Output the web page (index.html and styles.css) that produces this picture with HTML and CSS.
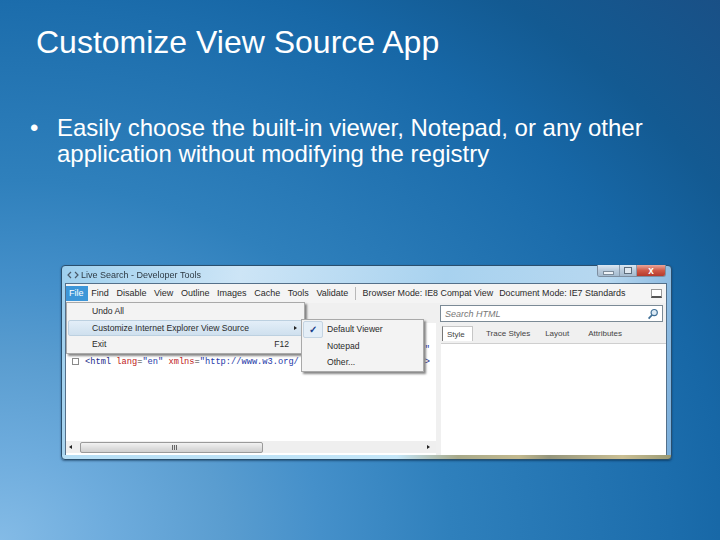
FILE: index.html
```html
<!DOCTYPE html>
<html lang="en">
<head>
<meta charset="utf-8">
<title>Customize View Source App</title>
<link rel="stylesheet" href="styles.css">
</head>
<body>
<main class="slide">
  <h1 class="title">Customize View Source App</h1>
  <ul class="bullets">
    <li><span class="dot">•</span><span>Easily choose the built-in viewer, Notepad, or any other application without modifying the registry</span></li>
  </ul>
  <section class="window">
    <header class="titlebar">
      <svg class="appicon" width="12" height="8" viewBox="0 0 12 8"><path d="M4 1 1 4l3 3M8 1l3 3-3 3" fill="none" stroke="#4a5a6a" stroke-width="1.2"/></svg>
      <span class="wintitle">Live Search - Developer Tools</span>
      <div class="controls">
        <span class="ctl ctl-min"><i></i></span>
        <span class="ctl ctl-max"><i></i></span>
        <span class="ctl ctl-close">x</span>
      </div>
    </header>
    <div class="client">
      <nav class="menubar">
        <span class="mi mi-active">File</span>
        <span class="mi">Find</span>
        <span class="mi">Disable</span>
        <span class="mi">View</span>
        <span class="mi">Outline</span>
        <span class="mi">Images</span>
        <span class="mi">Cache</span>
        <span class="mi">Tools</span>
        <span class="mi">Validate</span>
        <span class="sep"></span>
        <span class="mi mi-mode">Browser Mode: IE8 Compat View</span>
        <span class="mi mi-mode">Document Mode: IE7 Standards</span>
        <span class="dock"></span>
      </nav>
      <div class="toolrow">
        <div class="search">
          <em>Search HTML</em>
          <svg width="12" height="12" viewBox="0 0 12 12"><circle cx="7.2" cy="4.6" r="3.1" fill="#dceaf5" stroke="#3f6f96" stroke-width="1.2"/><path d="M5 7 1.6 10.6" stroke="#3f6f96" stroke-width="1.8"/></svg>
        </div>
      </div>
      <div class="panes">
        <div class="left">
          <div class="code">
            <div class="line line-end"><span class="str">"</span></div>
            <div class="line">
              <span><span class="expander"></span><span class="tag">&lt;html</span> <span class="attr">lang</span>=<span class="str">"en"</span> <span class="attr">xmlns</span>=<span class="str">"http://www.w3.org/</span></span>
              <span><span class="str">"</span><span class="tag">&gt;</span></span>
            </div>
          </div>
          <div class="hscroll">
            <span class="arrow arrow-l"></span>
            <div class="thumb"><span class="grip"></span></div>
            <span class="arrow arrow-r"></span>
          </div>
        </div>
        <div class="right">
          <div class="tabs">
            <span class="tab tab-on">Style</span>
            <span class="tab">Trace Styles</span>
            <span class="tab">Layout</span>
            <span class="tab tab-last">Attributes</span>
          </div>
        </div>
      </div>
    </div>
    <div class="menu menu-file">
      <div class="row"><span>Undo All</span></div>
      <div class="row row-hi"><span>Customize Internet Explorer View Source</span><b class="sub"></b></div>
      <div class="row"><span>Exit</span><span class="key">F12</span></div>
    </div>
    <div class="menu menu-sub">
      <div class="row2"><span class="check check-on">✓</span><span>Default Viewer</span></div>
      <div class="row2"><span class="check"></span><span>Notepad</span></div>
      <div class="row2"><span class="check"></span><span>Other...</span></div>
    </div>
  </section>
</main>
</body>
</html>
```
FILE: styles.css
```css
* { box-sizing: border-box; }
html, body { margin: 0; padding: 0; }
body { width: 720px; height: 540px; overflow: hidden; font-family: "Liberation Sans", Arial, sans-serif; }
.slide {
  width: 720px; height: 540px;
  display: flex; flex-direction: column;
  padding: 24px 48px 0 0;
  background: radial-gradient(ellipse 1000px 800px at 0% 100%, #84bbe6 0%, #6eacdd 11%, #5a9dd0 22.5%, #4590ca 32%, #2f80bc 45%, #1c6dac 67%, #1767a6 73%, #135a92 84%, #1a4f85 100%);
}
.title { margin: 0 0 0 36px; font-size: 32px; line-height: 36px; font-weight: 400; color: #fff; white-space: nowrap; }
.bullets { list-style: none; margin: 55px 0 0 30px; padding: 0; font-size: 24px; line-height: 26px; color: #fff; }
.bullets li { display: flex; }
.dot { width: 27px; flex: none; }
.window {
  position: relative;
  width: 611px; height: 195px;
  margin: 98px 0 0 61px;
  padding: 0 4px 4px 3px;
  border: 1px solid #2a4f6e;
  border-radius: 4px;
  box-shadow: 0 1px 2px rgba(0,30,60,.5);
  background:
    linear-gradient(90deg, #b6def5 0%, #c4e6f8 55%, #a7a98a 65%, #c2b98f 75%, #94957c 80%, #cabf94 92%, #9a9a74 100%) bottom / 100% 4px no-repeat,
    linear-gradient(100deg, #9fd0ee 0%, #cde5f6 28%, #a8d2ef 60%, #b7d8f0 85%, #7aaedb 100%);
  display: flex; flex-direction: column;
  font-size: 9px; color: #333;
  filter: blur(.5px);
}
.titlebar { height: 17px; flex: none; display: flex; align-items: center; padding-left: 2px; position: relative; }
.appicon { margin-right: 2px; }
.wintitle { font-size: 9px; color: #2e3a44; }
.controls { position: absolute; right: 1px; top: -1px; height: 12px; display: flex; border: 1px solid #7d8ea0; border-top: 0; border-radius: 0 0 3px 3px; overflow: hidden; }
.ctl { display: flex; align-items: center; justify-content: center; height: 100%; background: linear-gradient(#dbe7f2, #b9cbdc 50%, #a5bbcf); border-right: 1px solid #8a9bad; }
.ctl-min { width: 22px; }
.ctl-min i { width: 9px; height: 2px; background: #eef3f8; margin-top: 5px; box-shadow: 0 0 0 1px #7d8c9b; }
.ctl-max { width: 17px; }
.ctl-max i { width: 8px; height: 7px; border: 1px solid #5e6d7c; background: #dfe8f0; }
.ctl-close { width: 28px; border: 0; color: #fff; font-weight: 700; font-size: 10px; background: linear-gradient(#e9a79c, #cf5a48 50%, #b53a2c); }
.client { flex: 1; min-height: 0; display: flex; flex-direction: column; background: #f0f0f0; border: 1px solid #54708a; border-bottom: 0; }
.menubar { height: 19px; flex: none; display: flex; align-items: flex-start; padding: 2px 3px 0 0; background: #f4f4f4; }
.mi { padding: 0 3.8px; line-height: 15px; white-space: nowrap; color: #2a2a2a; }
.mi-active { background: #3d96d8; color: #fff; width: 21.5px; padding: 0 0 0 3px; }
.mi-mode { padding: 0 4px 0 2px; font-size: 8.9px; }
.sep { width: 1px; height: 13px; background: #b8b8b8; margin: 1px 4.5px 0 3px; }
.dock { width: 11px; height: 9px; margin: 3px 1px 0 auto; border: 1px solid #9a9a9a; border-bottom: 2px solid #555; background: #fff; }
.toolrow { height: 20px; flex: none; display: flex; justify-content: flex-end; align-items: flex-start; padding: 2px 3px 0 0; background: #f0f0f0; }
.search { width: 223px; height: 17px; display: flex; align-items: center; justify-content: space-between; padding: 0 3px 0 4px; background: #fff; border: 1px solid #7b8a96; color: #777; }
.search em { font-size: 9px; }
.panes { flex: 1; min-height: 0; display: flex; }
.left { width: 370px; flex: none; display: flex; flex-direction: column; background: #fff; position: relative; }
.code { flex: 1; padding: 21px 6px 0 6px; font-family: "Liberation Mono", monospace; font-size: 8.7px; line-height: 12px; color: #333; white-space: nowrap; overflow: hidden; }
.line { display: flex; justify-content: space-between; height: 12px; }
.line-end { justify-content: flex-end; }
.expander { display: inline-block; width: 7px; height: 7px; border: 1px solid #8a8a8a; margin-right: 6px; vertical-align: -1px; }
.tag { color: #1c2b8a; }
.attr { color: #c02020; }
.str { color: #2438a8; }
.hscroll { height: 12px; flex: none; display: flex; align-items: center; background: #efefef; margin-bottom: 2px; }
.arrow { width: 0; height: 0; border-top: 2.5px solid transparent; border-bottom: 2.5px solid transparent; flex: none; }
.arrow-l { border-right: 3px solid #222; margin: 0 8px 0 3px; }
.arrow-r { border-left: 3px solid #222; margin-left: auto; margin-right: 6px; }
.thumb { width: 183px; height: 11px; display: flex; align-items: center; justify-content: center; background: linear-gradient(#f2f2f2, #e0e0e0 50%, #cfcfcf); border: 1px solid #9a9a9a; border-radius: 2px; }
.grip { width: 5px; height: 5px; margin-left: 6px; background: repeating-linear-gradient(90deg, #666 0 1px, #ddd 1px 2px); }
.right { flex: 1; margin-left: 5px; background: #fff; display: flex; flex-direction: column; }
.tabs { height: 21px; flex: none; display: flex; align-items: flex-start; gap: 15px; padding: 3px 0 0 1px; background: #f0f0f0; border-bottom: 1px solid #cfcfcf; font-size: 8px; }
.tab { line-height: 15px; color: #444; white-space: nowrap; }
.tab-on { width: 31px; padding: 0 0 0 4px; margin-right: -2px; height: 15px; background: #fff; border: 1px solid #c6c6c6; border-left-color: #777; border-bottom: 0; }
.tab-last { margin-left: 4px; }
.menu { position: absolute; background: #f3f3f3; border: 1px solid #a9a9a9; box-shadow: 2px 2px 2px rgba(70,70,70,.65); color: #2a2a2a; font-size: 8.6px; }
.menu-file { left: 4px; top: 36px; width: 239px; height: 52px; padding: 0 1px; }
.row { height: 16.5px; display: flex; align-items: center; justify-content: space-between; padding: 0 14px 0 24px; position: relative; }
.row-hi { background: linear-gradient(#e3eef8, #cfe0ee); border: 1px solid #bcd0e0; border-radius: 2px; padding-left: 23px; }
.sub { position: absolute; right: 5px; top: 5px; width: 0; height: 0; border-left: 3px solid #222; border-top: 2.5px solid transparent; border-bottom: 2.5px solid transparent; }
.menu-sub { left: 239px; top: 53px; width: 123px; height: 53px; padding: 1px; }
.row2 { height: 16.5px; display: flex; align-items: center; }
.check { width: 20px; flex: none; margin-right: 4px; height: 100%; text-align: center; font-size: 10px; color: #1b3f8a; font-weight: 700; line-height: 16px; }
.check-on { background: #e4eef7; border: 1px solid #c4d4e2; border-radius: 2px; }
```
